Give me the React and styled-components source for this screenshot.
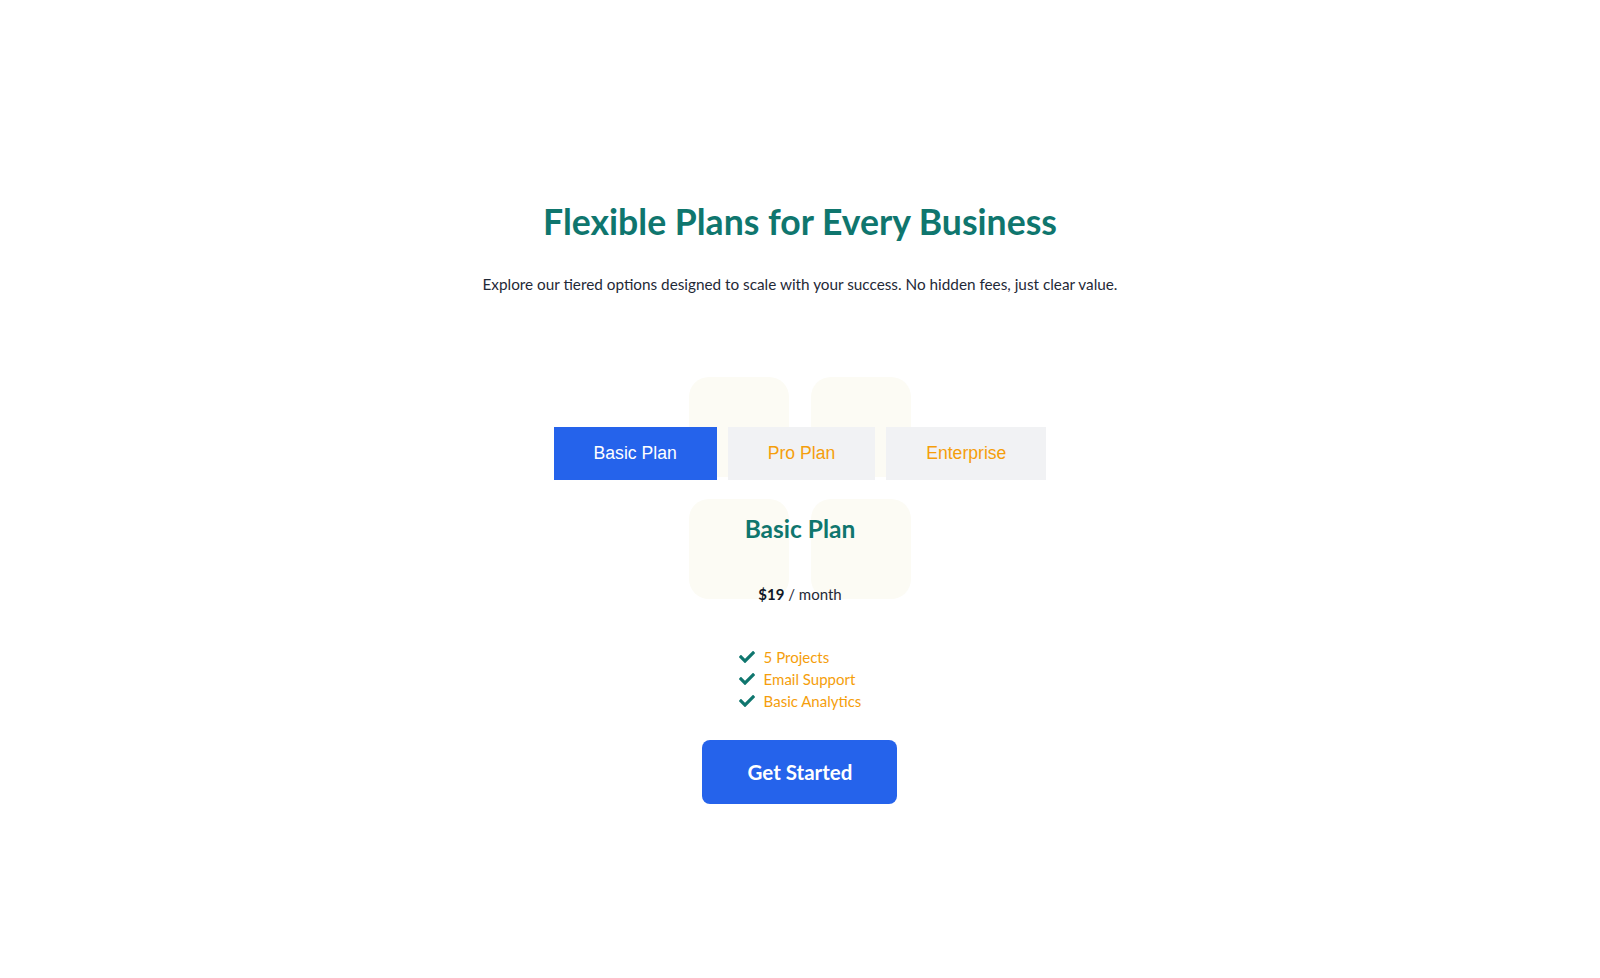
import { useState } from "react";
import styled, { createGlobalStyle } from "styled-components";
import { FaCheck } from "react-icons/fa";

const GlobalStyle = createGlobalStyle`
  body {
    margin: 0;
    background: #ffffff;
    font-family: Lato, "Open Sans", sans-serif;
  }
`;

const Page = styled.div`
  display: flex;
  flex-direction: column;
  align-items: center;
  padding-top: 200px;
`;

const Title = styled.h1`
  margin: 0;
  font-size: 35.6px;
  line-height: 44px;
  font-weight: 700;
  color: #0f766e;
`;

const Subtitle = styled.p`
  margin: 28px 0 0;
  font-size: 15.3px;
  line-height: 24px;
  color: #1f2937;
`;

const Stage = styled.div`
  position: relative;
  margin-top: 81px;
  display: flex;
  flex-direction: column;
  align-items: center;
`;

const Pattern = styled.div`
  position: absolute;
  top: 0;
  left: 50%;
  transform: translateX(-50%);
  display: grid;
  grid-template-columns: 100px 100px;
  grid-auto-rows: 100px;
  gap: 22px;
  z-index: 0;
`;

const Tile = styled.div`
  background: #fcfbf4;
  border-radius: 20px;
`;

const Tabs = styled.div`
  position: relative;
  z-index: 1;
  display: flex;
  gap: 11px;
  margin-top: 50px;
`;

const Tab = styled.button`
  border: none;
  padding: 16px 40px;
  font-family: "Liberation Sans", Arial, sans-serif;
  font-size: 17.6px;
  line-height: 21px;
  cursor: pointer;
  background: ${(p) => (p.$active ? "#2563eb" : "#f1f2f4")};
  color: ${(p) => (p.$active ? "#ffffff" : "#f59e0b")};
`;

const Card = styled.div`
  position: relative;
  z-index: 1;
  display: flex;
  flex-direction: column;
  align-items: center;
`;

const PlanName = styled.h2`
  margin: 34px 0 0;
  font-size: 24.5px;
  line-height: 30px;
  font-weight: 700;
  color: #0f766e;
`;

const Price = styled.p`
  margin: 40px 0 0;
  font-size: 15px;
  line-height: 20px;
  color: #1f2937;

  strong {
    font-weight: 700;
    color: #111827;
  }
`;

const Features = styled.ul`
  list-style: none;
  margin: 42px 0 0;
  padding: 0;
  display: flex;
  flex-direction: column;
`;

const Feature = styled.li`
  display: flex;
  align-items: center;
  gap: 9px;
  font-size: 15px;
  line-height: 22px;
  color: #f59e0b;

  svg {
    color: #0f766e;
    font-size: 16px;
  }
`;

const CTA = styled.button`
  margin-top: 28px;
  width: 195px;
  height: 64px;
  border: none;
  border-radius: 8px;
  background: #2563eb;
  color: #ffffff;
  font-family: Lato, "Open Sans", sans-serif;
  font-size: 20.5px;
  font-weight: 700;
  cursor: pointer;
`;

const plans = {
  basic: { name: "Basic Plan", price: "$19", features: ["5 Projects", "Email Support", "Basic Analytics"] },
  pro: { name: "Pro Plan", price: "$49", features: ["Unlimited Projects", "Priority Support", "Advanced Analytics"] },
  enterprise: { name: "Enterprise", price: "$99", features: ["Custom Solutions", "Dedicated Manager", "Full Analytics Suite"] },
};

const tabs = [
  { id: "basic", label: "Basic Plan" },
  { id: "pro", label: "Pro Plan" },
  { id: "enterprise", label: "Enterprise" },
];

export default function App() {
  const [active, setActive] = useState("basic");
  const plan = plans[active];

  return (
    <>
      <GlobalStyle />
      <Page>
        <Title>Flexible Plans for Every Business</Title>
        <Subtitle>
          Explore our tiered options designed to scale with your success. No hidden fees, just clear value.
        </Subtitle>
        <Stage>
          <Pattern>
            <Tile />
            <Tile />
            <Tile />
            <Tile />
          </Pattern>
          <Tabs>
            {tabs.map((t) => (
              <Tab key={t.id} $active={active === t.id} onClick={() => setActive(t.id)}>
                {t.label}
              </Tab>
            ))}
          </Tabs>
          <Card>
            <PlanName>{plan.name}</PlanName>
            <Price>
              <strong>{plan.price}</strong> / month
            </Price>
            <Features>
              {plan.features.map((f) => (
                <Feature key={f}>
                  <FaCheck />
                  {f}
                </Feature>
              ))}
            </Features>
            <CTA>Get Started</CTA>
          </Card>
        </Stage>
      </Page>
    </>
  );
}
